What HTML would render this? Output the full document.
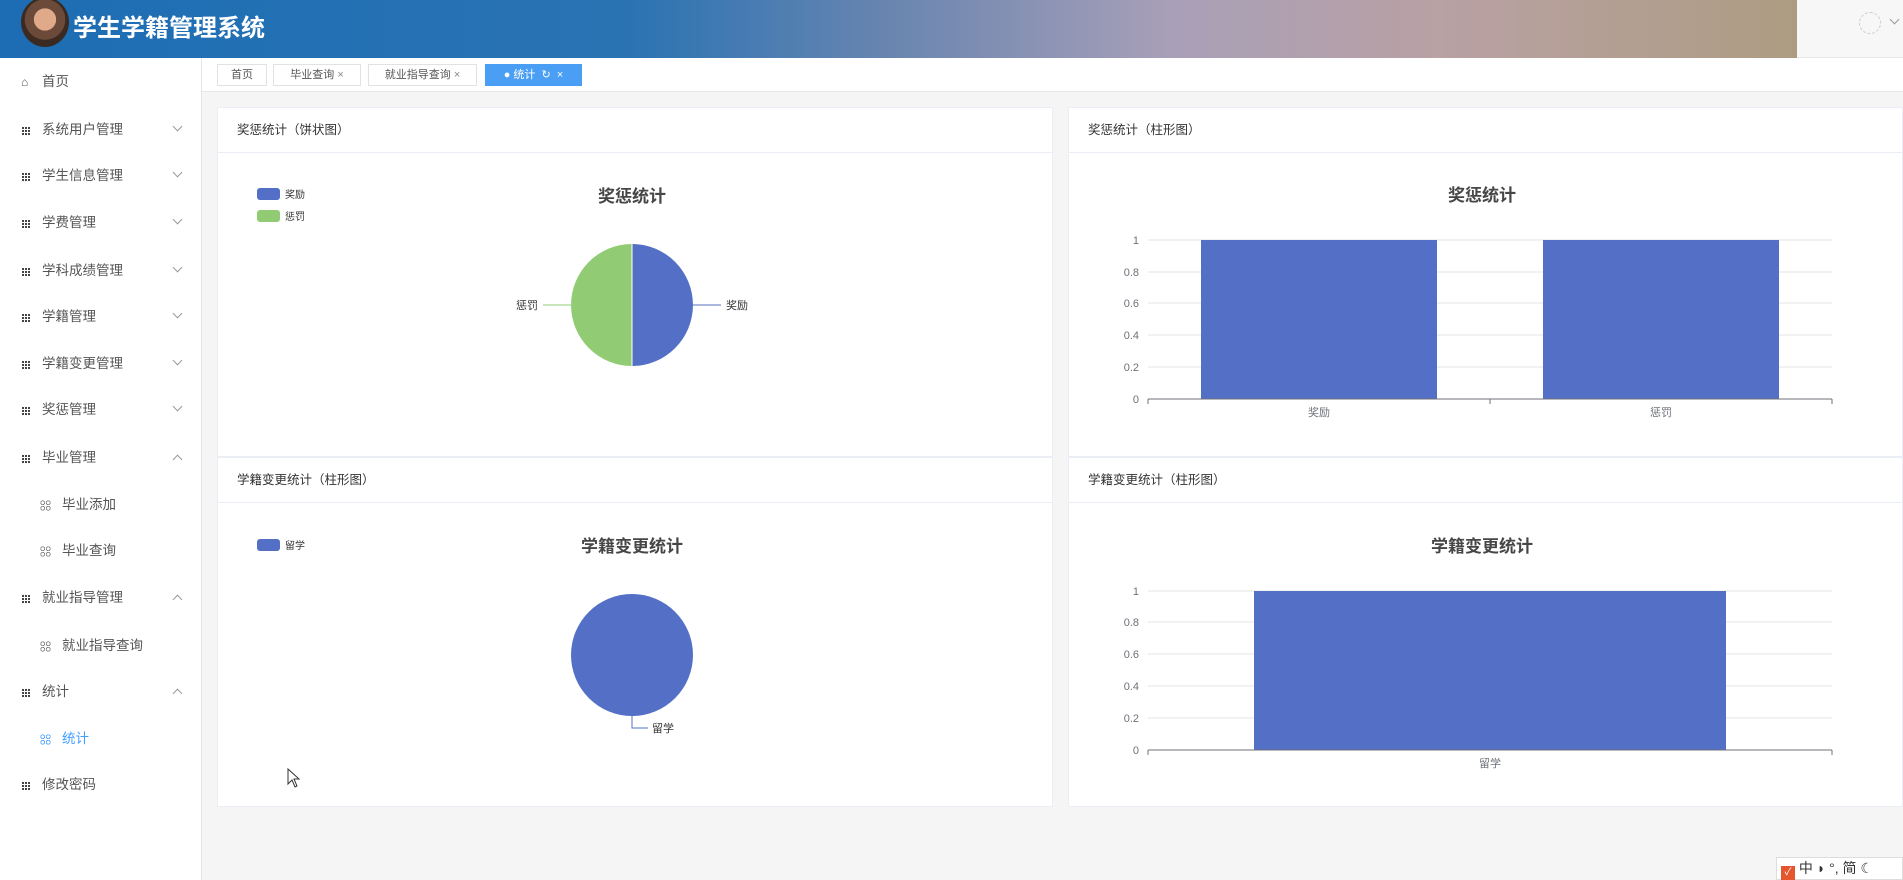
<!DOCTYPE html>
<html><head><meta charset="utf-8">
<style>
*{margin:0;padding:0;box-sizing:border-box}
body{width:1903px;height:880px;overflow:hidden;background:#f5f5f5;font-family:"Liberation Sans","Noto Sans CJK SC",sans-serif;color:#333;position:relative}
.abs{position:absolute}
#hdr{left:0;top:0;width:1797px;height:58px;background:linear-gradient(90deg,#1d6db4 0%,#2a73b3 35%,#6b86b0 50%,#a89fb8 65%,#b9a1a4 80%,#ae9c82 100%)}
#hdr2{left:1797px;top:0;width:106px;height:58px;background:#f7f7f7;border-bottom:1px solid #e8e8e8}
#ttl{left:73px;top:8px;font-size:24px;font-weight:bold;color:#fff;letter-spacing:0}
#av{left:21px;top:-3px;width:48px;height:50px;border-radius:50%;background:radial-gradient(circle at 50% 45%,#e0a98a 0 30%,#6b4a3a 31% 55%,#3b2a22 56%)}
#side{left:0;top:58px;width:202px;height:822px;background:#fff;border-right:1px solid #e6e6e6}
.mi{position:absolute;left:0;width:202px;font-size:13.5px;color:#555;height:20px;line-height:20px}
.mi .ic{position:absolute;left:22px;top:6px;width:9px;height:9px;background:#444}
.mi .ic:before{content:"";position:absolute;inset:0;background:repeating-linear-gradient(90deg,transparent 0 2px,#fff 2px 3px)}
.mi .ic:after{content:"";position:absolute;inset:0;background:repeating-linear-gradient(0deg,transparent 0 2px,#fff 2px 3px)}
.mi .tx{position:absolute;left:42px}
.mi .sic{position:absolute;left:40px;top:5px;width:11px;height:11px;border:0;background:
radial-gradient(circle,transparent 0 1.5px,#777 1.6px 2.4px,transparent 2.5px) 0 0/5.5px 5.5px}
.mi.sub .tx{left:62px}
.mi .ch{position:absolute;left:174px;top:3px;width:7px;height:7px;border-right:1px solid #999;border-bottom:1px solid #999;transform:rotate(45deg)}
.mi .ch.up{top:8px;transform:rotate(-135deg)}
#tabs{left:202px;top:58px;width:1701px;height:34px;background:#fff;border-bottom:1px solid #e6e6e6}
.tab{position:absolute;top:6px;height:22px;border:1px solid #e2e2e2;background:#fff;font-size:11px;color:#555;line-height:20px;text-align:center}
.panel{position:absolute;background:#fff;border:1px solid #ebeef5}
.ph{position:absolute;left:0;top:0;right:0;height:45px;border-bottom:1px solid #ebeef5;font-size:12.5px;color:#333;line-height:45px;padding-left:19px}
svg text{font-family:"Liberation Sans","Noto Sans CJK SC",sans-serif}
</style></head><body>
<div id="hdr" class="abs"></div>
<div id="hdr2" class="abs"><div class="abs" style="left:62px;top:12px;width:22px;height:22px;border:1px dashed #ccc;border-radius:50%"></div><div class="abs" style="left:94px;top:16px;width:7px;height:7px;border-right:1px solid #999;border-bottom:1px solid #999;transform:rotate(45deg)"></div></div>
<div id="av" class="abs"></div>
<div id="ttl" class="abs">学生学籍管理系统</div>

<div id="side" class="abs">
<div class="mi" style="top:14px"><span style="position:absolute;left:21px;top:0;font-size:12px;color:#555">⌂</span><span class="tx">首页</span></div>
<div class="mi" style="top:62px"><span class="ic"></span><span class="tx">系统用户管理</span><span class="ch"></span></div>
<div class="mi" style="top:108px"><span class="ic"></span><span class="tx">学生信息管理</span><span class="ch"></span></div>
<div class="mi" style="top:155px"><span class="ic"></span><span class="tx">学费管理</span><span class="ch"></span></div>
<div class="mi" style="top:203px"><span class="ic"></span><span class="tx">学科成绩管理</span><span class="ch"></span></div>
<div class="mi" style="top:249px"><span class="ic"></span><span class="tx">学籍管理</span><span class="ch"></span></div>
<div class="mi" style="top:296px"><span class="ic"></span><span class="tx">学籍变更管理</span><span class="ch"></span></div>
<div class="mi" style="top:342px"><span class="ic"></span><span class="tx">奖惩管理</span><span class="ch"></span></div>
<div class="mi" style="top:390px"><span class="ic"></span><span class="tx">毕业管理</span><span class="ch up"></span></div>
<div class="mi sub" style="top:437px"><span class="sic"></span><span class="tx">毕业添加</span></div>
<div class="mi sub" style="top:483px"><span class="sic"></span><span class="tx">毕业查询</span></div>
<div class="mi" style="top:530px"><span class="ic"></span><span class="tx">就业指导管理</span><span class="ch up"></span></div>
<div class="mi sub" style="top:578px"><span class="sic"></span><span class="tx">就业指导查询</span></div>
<div class="mi" style="top:624px"><span class="ic"></span><span class="tx">统计</span><span class="ch up"></span></div>
<div class="mi sub" style="top:671px;color:#409eff"><span class="sic" style="background:radial-gradient(circle,transparent 0 1.5px,#409eff 1.6px 2.4px,transparent 2.5px) 0 0/5.5px 5.5px"></span><span class="tx">统计</span></div>
<div class="mi" style="top:717px"><span class="ic"></span><span class="tx">修改密码</span></div>
</div>

<div id="tabs" class="abs">
<div class="tab" style="left:15px;width:50px">首页</div>
<div class="tab" style="left:71px;width:88px">毕业查询 <span style="color:#888">×</span></div>
<div class="tab" style="left:166px;width:109px">就业指导查询 <span style="color:#888">×</span></div>
<div class="tab" style="left:283px;width:97px;background:#4a9ff5;border-color:#4a9ff5;color:#fff">● 统计 &nbsp;↻ &nbsp;×</div>
</div>

<div class="panel" style="left:217px;top:107px;width:836px;height:350px">
<div class="ph">奖惩统计（饼状图）</div>
<svg class="abs" style="left:0;top:0" width="836" height="350">
<rect x="39" y="80" width="23" height="12" rx="3" fill="#5470c6"/><text x="67" y="90" font-size="10" fill="#333">奖励</text>
<rect x="39" y="102" width="23" height="12" rx="3" fill="#91cc75"/><text x="67" y="112" font-size="10" fill="#333">惩罚</text>
<text x="414" y="94" font-size="17" font-weight="bold" fill="#464646" text-anchor="middle">奖惩统计</text>
<path d="M414 136 A61 61 0 0 1 414 258 Z" fill="#5470c6"/>
<path d="M414 136 A61 61 0 0 0 414 258 Z" fill="#91cc75"/>
<line x1="414" y1="136" x2="414" y2="258" stroke="#fff"/>
<line x1="475" y1="197" x2="503" y2="197" stroke="#5470c6"/><text x="508" y="201" font-size="11" fill="#333">奖励</text>
<line x1="353" y1="197" x2="325" y2="197" stroke="#91cc75"/><text x="320" y="201" font-size="11" fill="#333" text-anchor="end">惩罚</text>
</svg></div>

<div class="panel" style="left:1068px;top:107px;width:835px;height:350px">
<div class="ph">奖惩统计（柱形图）</div>
<svg class="abs" style="left:0;top:0" width="835" height="350">
<text x="413" y="93" font-size="17" font-weight="bold" fill="#464646" text-anchor="middle">奖惩统计</text>
<g stroke="#e6e6e6"><line x1="79" y1="132" x2="763" y2="132"/><line x1="79" y1="164" x2="763" y2="164"/><line x1="79" y1="195" x2="763" y2="195"/><line x1="79" y1="227" x2="763" y2="227"/><line x1="79" y1="259" x2="763" y2="259"/></g>
<g font-size="11" fill="#6e7079" text-anchor="end"><text x="70" y="136">1</text><text x="70" y="168">0.8</text><text x="70" y="199">0.6</text><text x="70" y="231">0.4</text><text x="70" y="263">0.2</text><text x="70" y="295">0</text></g>
<rect x="132" y="132" width="236" height="159" fill="#5470c6"/>
<rect x="474" y="132" width="236" height="159" fill="#5470c6"/>
<g stroke="#6e7079"><line x1="79" y1="291" x2="763" y2="291"/><line x1="79" y1="291" x2="79" y2="296"/><line x1="421" y1="291" x2="421" y2="296"/><line x1="763" y1="291" x2="763" y2="296"/></g>
<g font-size="11" fill="#6e7079" text-anchor="middle"><text x="250" y="308">奖励</text><text x="592" y="308">惩罚</text></g>
</svg></div>

<div class="panel" style="left:217px;top:457px;width:836px;height:350px">
<div class="ph">学籍变更统计（柱形图）</div>
<svg class="abs" style="left:0;top:0" width="836" height="350">
<rect x="39" y="81" width="23" height="12" rx="3" fill="#5470c6"/><text x="67" y="91" font-size="10" fill="#333">留学</text>
<text x="414" y="94" font-size="17" font-weight="bold" fill="#464646" text-anchor="middle">学籍变更统计</text>
<circle cx="414" cy="197" r="61" fill="#5470c6"/>
<polyline points="414,258 414,270 430,270" fill="none" stroke="#5470c6"/><text x="434" y="274" font-size="11" fill="#333">留学</text>
</svg></div>

<div class="panel" style="left:1068px;top:457px;width:835px;height:350px">
<div class="ph">学籍变更统计（柱形图）</div>
<svg class="abs" style="left:0;top:0" width="835" height="350">
<text x="413" y="94" font-size="17" font-weight="bold" fill="#464646" text-anchor="middle">学籍变更统计</text>
<g stroke="#e6e6e6"><line x1="79" y1="133" x2="763" y2="133"/><line x1="79" y1="164" x2="763" y2="164"/><line x1="79" y1="196" x2="763" y2="196"/><line x1="79" y1="228" x2="763" y2="228"/><line x1="79" y1="260" x2="763" y2="260"/></g>
<g font-size="11" fill="#6e7079" text-anchor="end"><text x="70" y="137">1</text><text x="70" y="168">0.8</text><text x="70" y="200">0.6</text><text x="70" y="232">0.4</text><text x="70" y="264">0.2</text><text x="70" y="296">0</text></g>
<rect x="185" y="133" width="472" height="159" fill="#5470c6"/>
<g stroke="#6e7079"><line x1="79" y1="292" x2="763" y2="292"/><line x1="79" y1="292" x2="79" y2="297"/><line x1="763" y1="292" x2="763" y2="297"/></g>
<text x="421" y="309" font-size="11" fill="#6e7079" text-anchor="middle">留学</text>
</svg></div>

<svg class="abs" style="left:287px;top:768px" width="14" height="20"><path d="M1 1 L1 16 L5 12 L8 19 L10 18 L7 11 L12 11 Z" fill="#fff" stroke="#333" stroke-width="1"/></svg>

<div class="abs" style="left:1776px;top:857px;width:127px;height:23px;background:#fff;border:1px solid #ddd;font-size:14px;color:#333;line-height:21px;padding-left:4px;white-space:nowrap"><span style="display:inline-block;width:14px;height:14px;background:#e4572e;vertical-align:-2px;color:#fff;font-size:10px;line-height:14px;text-align:center">✓</span> 中 ◗ °, 简 ☾</div>
</body></html>
